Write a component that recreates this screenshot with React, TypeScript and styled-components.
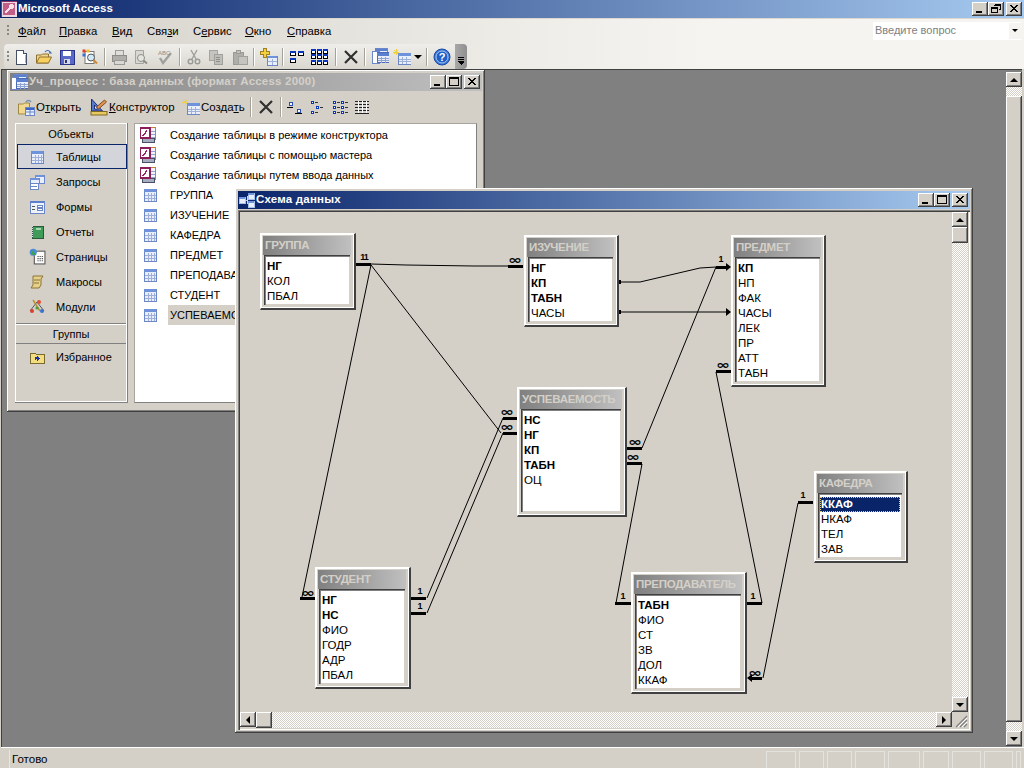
import React from "react";
import styled, { createGlobalStyle, css } from "styled-components";

const FACE = "#D4D0C8";
const UI = `"Liberation Sans", Arial, sans-serif`;

const Global = createGlobalStyle`
  html, body { margin: 0; padding: 0; background: ${FACE}; }
  body { font: 12px ${UI}; color: #000; }
  #root { width: 1024px; height: 768px; overflow: hidden; }
  u { text-decoration: underline; text-underline-offset: 1px; }
`;

const raised = css`
  background-color: ${FACE};
  box-shadow: inset -1px -1px #404040, inset 1px 1px #fff, inset -2px -2px #808080;
`;

const Screen = styled.div`
  width: 1024px; height: 768px; display: flex; flex-direction: column; overflow: hidden; background: ${FACE};
`;

const TitleBar = styled.div<{ $inactive?: boolean }>`
  height: 18px; flex: none; display: flex; align-items: center; gap: 1px; padding: 0 2px 0 1px;
  background: ${p => p.$inactive ? "linear-gradient(90deg,#808080,#C0C0C0)" : "linear-gradient(90deg,#0A246A,#A6CAF0)"};
`;
const TitleText = styled.span<{ $inactive?: boolean; $wide?: boolean }>`
  font: bold 11.5px ${UI}; color: ${p => (p.$inactive ? FACE : "#fff")}; white-space: nowrap; flex: 1; padding-bottom: 2px;
  ${p => p.$wide && "letter-spacing: 0.2px;"}
`;
const CtlGroup = styled.div`display: flex; align-items: center; flex: none;`;
const CtlBtn = styled.button<{ $gap?: number }>`
  ${raised}; width: 16px; height: 14px; padding: 0; border: 0; margin-left: ${p => p.$gap ?? 0}px;
  display: flex; align-items: center; justify-content: center;
  svg { width: 16px; height: 14px; display: block; }
`;

const MenuBar = styled.div`
  height: 26px; flex: none; display: flex; align-items: center; padding-bottom: 2px;
  background: linear-gradient(90deg,${FACE} 0%,#EDECE7 50%,#F5F4F1 70%); border-top: 1px solid #DCD8CF; box-sizing: border-box;
`;
const Grip = styled.i`
  width: 2px; height: 12px; margin-left: 7px; flex: none;
  background: repeating-linear-gradient(180deg,#8A8880 0 2px,transparent 2px 4px);
`;
const MenuItem = styled.span<{ $w: number }>`
  width: ${p => p.$w}px; flex: none; font: 11.3px ${UI};
`;
const AskBox = styled.div`
  margin-left: auto; margin-right: 3px; width: 148px; height: 18px; background: #fff; display: flex; align-items: center;
  color: #808080; font: 11px ${UI}; padding-left: 2px; box-sizing: border-box;
  span { flex: 1; padding-bottom: 2px; }
`;
const AskArrow = styled.b`
  width: 12px; height: 16px; background: #F5F4F1; display: flex; align-items: center; justify-content: center;
  &::after { content: ""; border: 3px solid transparent; border-top: 3px solid #000; border-bottom: 0; }
`;

const ToolRow = styled.div`
  height: 25px; flex: none; display: flex; align-items: stretch;
  background: linear-gradient(90deg,${FACE} 0%,#EDECE7 50%,#F5F4F1 70%);
`;
const ToolBand = styled.div`
  margin-left: 4px; width: 451px; flex: none; display: flex; align-items: center; height: 25px; box-sizing: border-box;
  background: linear-gradient(180deg,#EFEEEA,#DAD7D0); border-radius: 4px 0 0 4px;
  ${Grip} { margin-left: 3px; }
`;
const Chevron = styled.div`
  width: 12px; flex: none; background: linear-gradient(90deg,#A8A8A8,#8F8F8F); border-radius: 0 4px 4px 0;
  display: flex; align-items: flex-end; justify-content: center; padding-bottom: 3px; box-sizing: border-box;
  svg { width: 8px; height: 9px; display: block; }
`;
const ToolSlot = styled.span<{ $w: number }>`
  width: ${p => p.$w}px; flex: none; display: flex; align-items: center; justify-content: center; height: 22px;
`;
const ToolSep = styled.i<{ $h?: number }>`
  width: 8px; flex: none; height: ${p => p.$h ?? 18}px; display: block;
  background: linear-gradient(90deg,transparent 3px,#A5A29A 3px 4px,#fff 4px 5px,transparent 5px);
`;
const Ico = styled.svg<{ $s?: number }>`
  width: ${p => p.$s ?? 16}px; height: ${p => p.$s ?? 16}px; display: block; flex: none;
`;

const Workspace = styled.div`
  flex: 1; min-height: 0; display: flex; margin-left: 1px; padding-right: 2px;
  border-bottom: 1px solid #fff;
`;
const Desktop = styled.div`
  flex: 1; position: relative; background: #808080; border-left: 1px solid #404040; border-top: 1px solid #404040;
  overflow: hidden;
`;

const ScrollV = styled.div`
  display: flex; flex-direction: column; width: 16px; flex: none;
`;
const MainScroll = styled(ScrollV)`
  padding: 2px 0 1px 2px; background: #808080; width: 18px; box-sizing: border-box; border-top: 1px solid #404040;
`;
const ScrollH = styled.div`
  display: flex; height: 16px; min-width: 0;
`;
const ScrollBtn = styled.div`
  ${raised}; width: 16px; height: 15px; flex: none; display: flex; align-items: center; justify-content: center;
`;
const Arrow = styled.i<{ $d: "up" | "down" | "left" | "right" }>`
  width: 0; height: 0; display: block; border: 4px solid transparent;
  ${p => p.$d === "up" && "border-top:0;border-bottom:4px solid #000;"}
  ${p => p.$d === "down" && "border-bottom:0;border-top:4px solid #000;"}
  ${p => p.$d === "left" && "border-left:0;border-right:4px solid #000;"}
  ${p => p.$d === "right" && "border-right:0;border-left:4px solid #000;"}
`;
const Thumb = styled.div<{ $len?: number }>`
  ${raised};
  ${p => p.$len ? `flex: 0 0 ${p.$len}px;` : "flex: 1;"}
`;
const Track = styled.div<{ $len?: number }>`
  ${p => p.$len ? `flex: 0 0 ${p.$len}px;` : "flex: 1;"}
  background-image: conic-gradient(#fff 25%, ${FACE} 0 50%, #fff 0 75%, ${FACE} 0);
  background-size: 2px 2px;
`;

const StatusBar = styled.div`
  height: 20px; flex: none; display: flex; align-items: center; padding-left: 9px; padding-top: 2px; box-sizing: border-box;
  font: 11.5px ${UI}; background: ${FACE};
`;
const StatusText = styled.span`flex: 1; padding-left: 2px; border-left: 1px solid #E8E6E1; line-height: 18px;`;
const StatusCell = styled.i<{ $w: number }>`
  display: block; width: ${p => p.$w}px; height: 17px; flex: none; margin-right: 3px; box-sizing: border-box;
  border: 1px solid #E4E2DC; border-bottom: 0;
`;

const Win = styled.div<{ $x: number; $y: number; $w: number; $h: number }>`
  ${raised}; position: absolute; left: ${p => p.$x - 2}px; top: ${p => p.$y - 70}px;
  width: ${p => p.$w}px; height: ${p => p.$h}px; padding: 3px; box-sizing: border-box;
  display: flex; flex-direction: column;
  box-shadow: inset -1px -1px #404040, inset 1px 1px #fff, inset -2px -2px #808080, inset 2px 2px ${FACE};
`;

const DbBar = styled.div`
  height: 32px; flex: none; display: flex; align-items: center; padding-left: 8px; font: 11.5px ${UI};
`;
const DbBtn = styled.span<{ $w: number }>`
  width: ${p => p.$w}px; flex: none; display: flex; align-items: center; gap: 1px; white-space: nowrap;
`;
const DbBody = styled.div`
  flex: 1; min-height: 0; display: flex; gap: 6px; padding: 0 5px 6px 5px;
`;
const ObjPanel = styled.div`
  width: 113px; flex: none; display: flex; flex-direction: column; box-sizing: border-box; padding: 1px;
  box-shadow: inset 0 0 0 1px #fff; border-bottom: 1px solid #808080; border-right: 1px solid #808080; font: 11px ${UI};
`;
const ObjHead = styled.div<{ $line?: boolean }>`
  height: 20px; flex: none; display: flex; align-items: center; justify-content: center;
  ${p => p.$line && `margin-top: 4px; height: 21px; border-top: 1px solid #808080; border-bottom: 1px solid #808080; box-shadow: inset 0 1px #fff; box-sizing: border-box;`}
`;
const ObjItem = styled.div<{ $sel?: boolean }>`
  height: 25px; flex: none; box-sizing: border-box; display: flex; align-items: center; margin-left: 1px;
  padding-left: ${p => (p.$sel ? 11 : 12)}px; gap: 11px;
  ${p => p.$sel && `background: #D3D5DA; border: 1px solid #0A246A; margin-right: -1px;`}
  span { white-space: nowrap; }
`;
const ObjIcon = styled.b`
  width: 16px; height: 18px; flex: none; display: flex; align-items: center; justify-content: center;
`;
const ListPanel = styled.div`
  flex: 1; min-width: 0; background: #fff; padding-top: 1px; box-sizing: border-box; overflow: hidden;
  border: 1px solid #fff; border-bottom-color: #808080; border-right-color: #808080; border-top-color: #A8A59E; border-left-color: #A8A59E;
  font: 11px ${UI};
`;
const ListRow = styled.div`
  height: 20px; display: flex; align-items: center; white-space: nowrap; padding-left: 5px;
`;
const ListIcon = styled.span<{ $shift?: number }>`
  width: 28px; flex: none; display: flex; justify-content: flex-start; box-sizing: border-box; padding-left: ${p => p.$shift ?? 0}px;
`;
const ListLabel = styled.span<{ $sel?: boolean }>`
  padding: 0 0 0 2px; height: 20px; line-height: 20px; flex: none; ${p => p.$sel && `background: ${FACE}; padding-right: 60px;`}
`;

const Client = styled.div`
  flex: 1; min-height: 0; margin-top: 1px; padding: 2px; display: grid;
  grid-template-columns: minmax(0,1fr) 16px; grid-template-rows: minmax(0,1fr) 16px; background: ${FACE};
  box-shadow: inset 1px 1px #808080, inset 2px 2px #404040, inset -1px -1px #fff;
`;
const Canvas = styled.div`position: relative; overflow: hidden;`;
const Lines = styled.svg`position: absolute; left: 0; top: 0; width: 712px; height: 500px;`;
const Resize = styled.svg`width: 16px; height: 16px; display: block;`;

const TableBox = styled.div<{ $x: number; $y: number; $w: number }>`
  position: absolute; left: ${p => p.$x - 240}px; top: ${p => p.$y - 212}px; width: ${p => p.$w}px;
  box-sizing: border-box; background: ${FACE}; padding: 2px 3px 3px 2px;
  border-style: solid; border-color: #fff #404040 #404040 #fff; border-width: 1px 2px 2px 1px;
  box-shadow: inset 1px 1px #fff, inset -1px -1px #fff;
`;
const TableTitle = styled.div`
  height: 19px; padding-left: 2px; font: bold 11.5px/18px ${UI}; letter-spacing: -0.3px; color: ${FACE}; white-space: nowrap; overflow: hidden;
  background: linear-gradient(90deg,#808080,#C0C0C0);
`;
const FieldList = styled.div<{ $h?: number }>`
  background: #fff; padding: 4px 2px 1px 2px; margin: 0 1px; box-sizing: border-box;
  ${p => p.$h && `height: ${p.$h}px;`}
  box-shadow: inset 1px 1px #404040, inset 2px 2px #808080, inset -1px -1px ${FACE};
  font: 11.5px ${UI};
`;
const Field = styled.div<{ $key?: boolean; $sel?: boolean }>`
  height: 15px; line-height: 15px; padding-left: 1px; white-space: nowrap;
  ${p => p.$key && "font-weight: bold;"}
  ${p => p.$sel && `background: #0A246A; color: #fff; outline: 1px dotted #E8D060; outline-offset: -1px;`}
`;

/* ---------- icons ---------- */
const TableIco = () => (
  <Ico viewBox="0 0 16 16" shapeRendering="crispEdges">
    <rect x="2" y="2" width="12" height="12" fill="#E8EEFA" stroke="#6C87C8" />
    <rect x="2" y="2" width="12" height="3" fill="#6F93DA" />
    <path d="M3 8h11M3 11h11M6 6v8M9 6v8M12 6v8" stroke="#9FB0D8" />
  </Ico>
);
const WizardIco = () => (
  <Ico viewBox="0 0 16 16" $s={17} shapeRendering="crispEdges">
    <rect x="6" y="0" width="9" height="12" fill="#F4F4F4" stroke="#C88038" />
    <path d="M9 4h5M9 7h5M9 10h5" stroke="#8FA4D0" />
    <rect x="2" y="11" width="12" height="4" fill="#A8ACC0" stroke="#4A4F68" />
    <rect x="0" y="1" width="9" height="9" fill="#fff" stroke="#8A1E5A" strokeWidth="2" />
    <path d="M2 8l4-5 1 1-4 5z" fill="#A02070" />
  </Ico>
);
const QueryIco = () => (
  <Ico viewBox="0 0 16 16" shapeRendering="crispEdges">
    <rect x="6" y="1" width="9" height="8" fill="#E8EEFA" stroke="#6C87C8" /><rect x="6" y="1" width="9" height="2" fill="#6F93DA" />
    <rect x="1" y="4" width="9" height="5" fill="#E8EEFA" stroke="#6C87C8" /><rect x="1" y="4" width="9" height="2" fill="#6F93DA" />
    <rect x="1" y="9" width="8" height="6" fill="#fff" stroke="#6C87C8" /><path d="M2 12h6" stroke="#6C87C8" />
  </Ico>
);
const FormIco = () => (
  <Ico viewBox="0 0 16 16" shapeRendering="crispEdges">
    <rect x="1" y="2" width="14" height="12" fill="#EEF2FA" stroke="#6C87C8" /><rect x="1" y="2" width="14" height="2" fill="#5C80D0" />
    <path d="M3 7h3M3 10h3" stroke="#555" /><rect x="8" y="6" width="5" height="2" fill="#fff" stroke="#6C87C8" /><rect x="8" y="9" width="5" height="2" fill="#fff" stroke="#6C87C8" />
  </Ico>
);
const ReportIco = () => (
  <Ico viewBox="0 0 16 16" shapeRendering="crispEdges">
    <rect x="3" y="2" width="11" height="12" fill="#3E9B58" stroke="#2C5A38" />
    <path d="M3 2v12" stroke="#DDE" strokeDasharray="1 1" /><rect x="7" y="4" width="5" height="2" fill="#A8D8B0" />
  </Ico>
);
const PageIco = () => (
  <Ico viewBox="0 0 16 16" $s={17}>
    <rect x="5" y="3" width="10" height="12" fill="#fff" stroke="#555" />
    <path d="M8 8h5M8 10h5M8 12h5" stroke="#333" strokeDasharray="1 1" />
    <circle cx="4" cy="4" r="3.4" fill="#4A8CD8" /><path d="M2 2c2 0 2 3 4 3 0 2-2 2-3 1z" fill="#3FA048" />
  </Ico>
);
const MacroIco = () => (
  <Ico viewBox="0 0 16 16">
    <path d="M4 2h10l-2 3v6l-2 3H2l2-3V5z" fill="#E6D08A" stroke="#8A7434" />
    <path d="M5 6h6M5 9h5" stroke="#8A7434" />
  </Ico>
);
const ModuleIco = () => (
  <Ico viewBox="0 0 18 16" $s={18}>
    <path d="M2 12L9 3l7 9" fill="none" stroke="#556" strokeWidth="1" />
    <path d="M5 1l7 11" stroke="#B89020" strokeWidth="1.4" />
    <circle cx="4" cy="12" r="2" fill="#D84030" /><circle cx="14" cy="12" r="2" fill="#3A70D0" /><circle cx="11" cy="3" r="2" fill="#E05030" /><circle cx="9" cy="9" r="1.6" fill="#48A048" />
  </Ico>
);
const FavIco = () => (
  <Ico viewBox="0 0 16 16" shapeRendering="crispEdges">
    <path d="M1 4h5l1 1h8v9H1z" fill="#F2DE80" stroke="#7A6A30" />
    <path d="M8 7v5M6 9.500h5M6 8l4 3M10 8l-4 3" stroke="#2030A0" />
  </Ico>
);
const NewIco = () => (
  <Ico viewBox="0 0 16 16" shapeRendering="crispEdges">
    <path d="M3 1h7l3 3v11H3z" fill="#fff" stroke="#44506A" /><path d="M10 1v3h3" fill="#D8E0F0" stroke="#44506A" /><path d="M12 6v8" stroke="#A8B4D0" />
  </Ico>
);
const OpenIco = () => (
  <Ico viewBox="0 0 16 16">
    <path d="M0.500 6h5l1-1h6v9h-12z" fill="#F0D890" stroke="#907030" />
    <path d="M0.500 14l3-6h12l-3 6z" fill="#F8D060" stroke="#907030" />
    <path d="M9 3c1.500-2 4-2 5 0l1 1-2 0" fill="none" stroke="#3A6AB0" strokeWidth="1.200" />
  </Ico>
);
const SaveIco = () => (
  <Ico viewBox="0 0 16 16" shapeRendering="crispEdges">
    <rect x="1" y="1" width="14" height="14" fill="#5A68C8" stroke="#2A3488" />
    <rect x="4" y="2" width="8" height="5" fill="#fff" /><rect x="5" y="10" width="6" height="5" fill="#D8D8E0" /><rect x="6" y="11" width="2" height="3" fill="#2A3488" />
  </Ico>
);
const SearchIco = () => (
  <Ico viewBox="0 0 16 16">
    <rect x="3" y="2.500" width="9" height="12" fill="#fff" stroke="#777" />
    <rect x="0.500" y="0.500" width="3" height="3" fill="#E04030" /><rect x="4.500" y="0.500" width="3" height="3" fill="#F0C030" /><rect x="0.500" y="4.500" width="3" height="3" fill="#3A70D0" />
    <circle cx="9" cy="8.500" r="3.500" fill="#D0E8F8" stroke="#555" /><path d="M11.500 11l3.500 3.500" stroke="#D08830" strokeWidth="2" />
  </Ico>
);
const PrintIco = () => (
  <Ico viewBox="0 0 16 16" shapeRendering="crispEdges">
    <path d="M4 1h8v5H4z" fill="#E0DED8" stroke="#9A9A96" /><rect x="1" y="6" width="14" height="6" fill="#B0AEA8" stroke="#8C8C88" /><rect x="3" y="11" width="10" height="4" fill="#DAD8D2" stroke="#9A9A96" />
  </Ico>
);
const PreviewIco = () => (
  <Ico viewBox="0 0 16 16">
    <path d="M2.500 1.500h8v13h-8z" fill="#DAD8D2" stroke="#A4A4A0" /><circle cx="8" cy="9" r="3.500" fill="#E6E4DE" stroke="#8C8C88" /><path d="M10.500 11.500l3.500 3" stroke="#8C8C88" strokeWidth="2" />
  </Ico>
);
const SpellIco = () => (
  <Ico viewBox="0 0 16 16">
    <path d="M3 9l3 5L14 4" fill="none" stroke="#A0A09C" strokeWidth="2.400" />
    <text x="1" y="6" fontFamily={UI} fontSize="6" fill="#8C8C88">ABC</text>
  </Ico>
);
const CutIco = () => (
  <Ico viewBox="0 0 16 16">
    <path d="M5 1l5 9M11 1L6 10" stroke="#A0A09C" strokeWidth="1.400" /><circle cx="4.500" cy="12.500" r="2.300" fill="none" stroke="#9A9A96" strokeWidth="1.400" /><circle cx="11.500" cy="12.500" r="2.300" fill="none" stroke="#9A9A96" strokeWidth="1.400" />
  </Ico>
);
const CopyIco = () => (
  <Ico viewBox="0 0 16 16" shapeRendering="crispEdges">
    <rect x="1" y="1" width="8" height="10" fill="#C6C4BE" stroke="#A4A4A0" /><rect x="6" y="5" width="8" height="10" fill="#C0BEB8" stroke="#A0A09C" /><path d="M8 8h4M8 10h4M8 12h4" stroke="#8E8E8A" />
  </Ico>
);
const PasteIco = () => (
  <Ico viewBox="0 0 16 16" shapeRendering="crispEdges">
    <rect x="1" y="3" width="10" height="12" fill="#B0AEA8" stroke="#9A9A96" /><rect x="4" y="1" width="4" height="3" fill="#C4C2BC" stroke="#9A9A96" /><rect x="6" y="7" width="9" height="8" fill="#C6C4BE" stroke="#A0A09C" />
  </Ico>
);
const AddRelIco = () => (
  <Ico viewBox="0 0 18 18" $s={18} shapeRendering="crispEdges">
    <path d="M3 0h3v3h3v3H6v3H3V6H0V3h3z" fill="#F2D040" stroke="#A08020" />
    <rect x="7" y="8" width="10" height="9" fill="#E8EEFA" stroke="#6C87C8" /><rect x="7" y="8" width="10" height="2" fill="#6F93DA" /><path d="M8 13h9M12 11v6" stroke="#9FB0D8" />
  </Ico>
);
const blue = "#0838C0";
const RelDirect = () => (
  <Ico viewBox="0 0 14 14" $s={14} shapeRendering="crispEdges">
    <rect x="0.500" y="1.500" width="5" height="4" fill="#fff" stroke="#000" /><rect x="0" y="1" width="6" height="2" fill={blue} />
    <rect x="8.500" y="1.500" width="5" height="4" fill="#fff" stroke="#000" /><rect x="8" y="1" width="6" height="2" fill={blue} />
    <rect x="0.500" y="8.500" width="5" height="4" fill="#fff" stroke="#000" /><rect x="0" y="8" width="6" height="2" fill={blue} />
  </Ico>
);
const RelAll = () => {
  const cells: React.ReactNode[] = [];
  [0, 6, 12].forEach(x => [0, 5, 11].forEach(y => cells.push(
    <g key={`${x}${y}`}><rect x={x + .5} y={y + .5} width="4" height="4" fill="#fff" stroke="#000" /><rect x={x} y={y} width="5" height="2" fill={blue} /></g>
  )));
  return <Ico viewBox="0 0 17 16" $s={17} shapeRendering="crispEdges">{cells}</Ico>;
};
const DeleteIco = () => (
  <Ico viewBox="0 0 16 16"><path d="M2 2l12 12M14 2L2 14" stroke="#303030" strokeWidth="2.200" /></Ico>
);
const DbWinIco = () => (
  <Ico viewBox="0 0 17 16" $s={17} shapeRendering="crispEdges">
    <rect x="3" y="0" width="12" height="10" fill="#E8EEFA" stroke="#6C87C8" /><rect x="3" y="0" width="12" height="2" fill="#5C80D0" />
    <rect x="0" y="3" width="7" height="12" fill="#fff" stroke="#6C87C8" />
    <rect x="5" y="4" width="12" height="10" fill="#E8EEFA" stroke="#4C6CB8" /><rect x="5" y="4" width="12" height="3" fill="#5C80D0" /><path d="M6 10h11M6 12h11M9 8v6M13 8v6" stroke="#8FA4D0" />
  </Ico>
);
const NewObjIco = () => (
  <Ico viewBox="0 0 18 16" $s={18} shapeRendering="crispEdges">
    <path d="M3 0v6M0 3h6M1 1l4 4M5 1L1 5" stroke="#F0D040" />
    <rect x="5" y="4" width="13" height="11" fill="#E8EEFA" stroke="#6C87C8" /><rect x="5" y="4" width="13" height="3" fill="#6F93DA" /><path d="M6 10h12M6 12h12M9 8v7M13 8v7" stroke="#9FB0D8" />
  </Ico>
);
const OpenDbIco = () => (
  <Ico viewBox="0 0 17 17" $s={17}>
    <path d="M0.500 5h5l1-1h5v11h-11z" fill="#F0D890" stroke="#A08840" />
    <rect x="7.500" y="8.500" width="9" height="8" fill="#E8EEFA" stroke="#6C87C8" /><rect x="8" y="9" width="8" height="2" fill="#3C64C8" /><path d="M8 13h8M12 11v6" stroke="#6C87C8" />
    <path d="M8 3c1-2 4-2 5 0" fill="none" stroke="#7A90B0" strokeWidth="1.300" />
  </Ico>
);
const DesignIco = () => (
  <Ico viewBox="0 0 17 18" $s={18}>
    <path d="M1 1v12h11z" fill="#5878C8" stroke="#1C2E78" /><path d="M4 7v4h4z" fill="#fff" stroke="#1C2E78" />
    <path d="M6 9l8-7 2 2-8 7z" fill="#E09050" stroke="#805020" />
    <rect x="0.500" y="13.500" width="16" height="3.500" fill="#E8C860" stroke="#806820" />
  </Ico>
);
const ViewIco = ({ kind }: { kind: number }) => {
  if (kind === 0) return (
    <Ico viewBox="0 0 16 14" $s={16} shapeRendering="crispEdges">
      <rect x="2" y="2" width="3" height="3" fill="#fff" stroke="#2850B0" /><path d="M0 7h6" stroke="#000" /><rect x="10" y="9" width="3" height="3" fill="#fff" stroke="#2850B0" /><path d="M8 13h7" stroke="#000" />
    </Ico>
  );
  if (kind === 3) return (
    <Ico viewBox="0 0 16 16" shapeRendering="crispEdges">
      <path d="M1 2h14M1 5h14M1 8h14M1 11h14M1 14h14" stroke="#222" />
      <path d="M4 2v12M8 2v12M12 2v12" stroke="#fff" />
    </Ico>
  );
  const pts = kind === 1 ? [[1, 2], [6, 7], [1, 12]] : [[0, 2], [8, 2], [0, 7], [8, 7], [0, 12], [8, 12]];
  return (
    <Ico viewBox="0 0 16 16" shapeRendering="crispEdges">
      {pts.map(([x, y], i) => (
        <g key={i}><rect x={x + .5} y={y + .5} width="2" height="2" fill="#fff" stroke={blue} /><path d={`M${x + 4} ${y + 1}h3`} stroke="#333" /></g>
      ))}
    </Ico>
  );
};
const HelpIco = () => (
  <Ico viewBox="0 0 18 18" $s={18}>
    <circle cx="9" cy="9" r="8" fill="#3A78D8" stroke="#1848A0" /><circle cx="9" cy="9" r="6" fill="#2060C8" stroke="#A8C8F0" />
    <text x="9" y="13" textAnchor="middle" fontFamily={UI} fontSize="11" fontWeight="bold" fill="#fff">?</text>
  </Ico>
);
const SchemaIco = () => (
  <Ico viewBox="0 0 16 16" shapeRendering="crispEdges">
    <rect x="0" y="5" width="6" height="6" fill="#E8EEFA" stroke="#A8C0E8" /><rect x="0" y="5" width="6" height="2" fill="#6F93DA" />
    <rect x="9" y="1" width="6" height="6" fill="#E8EEFA" stroke="#A8C0E8" /><rect x="9" y="1" width="6" height="2" fill="#6F93DA" />
    <rect x="9" y="9" width="6" height="6" fill="#E8EEFA" stroke="#A8C0E8" /><rect x="9" y="9" width="6" height="2" fill="#6F93DA" />
    <path d="M6 8h3M8 4v8" stroke="#C8D4F0" />
  </Ico>
);
const KeyIco = () => (
  <Ico viewBox="0 0 16 16" shapeRendering="crispEdges">
    <rect x="0" y="0" width="16" height="16" fill="#F0D8E0" stroke="#8A3060" />
    <rect x="2" y="2" width="12" height="12" fill="#C06088" />
    <path d="M4 12l5-5" stroke="#F8E0E8" strokeWidth="2" /><circle cx="10.500" cy="5.500" r="2.500" fill="#F8E0E8" />
  </Ico>
);

const Glyph = ({ k }: { k: "min" | "max" | "restore" | "close" }) => (
  <svg viewBox="0 0 16 14" shapeRendering="crispEdges">
    {k === "min" && <rect x="4" y="9" width="6" height="2" fill="#000" />}
    {k === "max" && <path d="M3.500 2.500h9v8h-9zM3 3.500h10" fill="none" stroke="#000" />}
    {k === "restore" && <path d="M6.500 2.500h6v5h-2M6 3.500h7M3.500 5.500h6v5h-6zM3 6.500h7" fill="none" stroke="#000" />}
    {k === "close" && <path d="M4 3l7 7M5 3l7 7M11 3l-7 7M12 3l-7 7" stroke="#000" shapeRendering="auto" />}
  </svg>
);

/* ---------- data ---------- */
const menu: [React.ReactNode, number][] = [
  [<><u>Ф</u>айл</>, 41], [<><u>П</u>равка</>, 53], [<><u>В</u>ид</>, 35], [<>Свя<u>з</u>и</>, 46],
  [<>С<u>е</u>рвис</>, 52], [<><u>О</u>кно</>, 42], [<><u>С</u>правка</>, 60],
];
const objects: [React.ReactNode, string][] = [
  [<TableIco />, "Таблицы"], [<QueryIco />, "Запросы"], [<FormIco />, "Формы"], [<ReportIco />, "Отчеты"],
  [<PageIco />, "Страницы"], [<MacroIco />, "Макросы"], [<ModuleIco />, "Модули"],
];
const wizards = ["Создание таблицы в режиме конструктора", "Создание таблицы с помощью мастера", "Создание таблицы путем ввода данных"];
const tableNames = ["ГРУППА", "ИЗУЧЕНИЕ", "КАФЕДРА", "ПРЕДМЕТ", "ПРЕПОДАВАТЕЛЬ", "СТУДЕНТ", "УСПЕВАЕМОСТЬ"];

type T = { name: string; x: number; y: number; w: number; keys: string[]; rest: string[]; h?: number; sel?: string };
const tables: T[] = [
  { name: "ГРУППА", x: 260, y: 233, w: 96, keys: ["НГ"], rest: ["КОЛ", "ПБАЛ"] },
  { name: "ИЗУЧЕНИЕ", x: 524, y: 235, w: 95, keys: ["НГ", "КП", "ТАБН"], rest: ["ЧАСЫ"] },
  { name: "ПРЕДМЕТ", x: 731, y: 235, w: 95, keys: ["КП"], rest: ["НП", "ФАК", "ЧАСЫ", "ЛЕК", "ПР", "АТТ", "ТАБН"] },
  { name: "УСПЕВАЕМОСТЬ", x: 517, y: 387, w: 110, keys: ["НС", "НГ", "КП", "ТАБН"], rest: ["ОЦ"], h: 103 },
  { name: "КАФЕДРА", x: 814, y: 471, w: 94, keys: ["ККАФ"], rest: ["НКАФ", "ТЕЛ", "ЗАВ"], sel: "ККАФ" },
  { name: "СТУДЕНТ", x: 315, y: 567, w: 96, keys: ["НГ", "НС"], rest: ["ФИО", "ГОДР", "АДР", "ПБАЛ"] },
  { name: "ПРЕПОДАВАТЕЛЬ", x: 631, y: 572, w: 116, keys: ["ТАБН"], rest: ["ФИО", "СТ", "ЗВ", "ДОЛ", "ККАФ"] },
];

const thin = [
  "371,264 406,265 474,266 508,266",
  "371,265 302,597",
  "371,265 501,433",
  "427,598 503,418",
  "427,613 503,433",
  "642,448 716,267",
  "642,464 616,603",
  "620,282 640,282 700,268 716,267",
  "620,312 726,312",
  "716,372 762,603",
  "798,503 763,678",
];
const thick: [number, number, number][] = [
  [356, 371, 264], [508, 523, 266], [300, 315, 598], [503, 517, 418], [503, 517, 433], [411, 426, 598], [411, 426, 613],
  [627, 642, 448], [627, 642, 463], [716, 726, 267], [716, 731, 371], [615, 631, 603], [747, 762, 603], [798, 813, 502], [752, 762, 678],
];
const ones: [number, number][] = [[420, 594], [420, 609], [721, 262], [623, 599], [753, 599], [803, 498]];
const infs: [number, number][] = [[515, 263.5], [507, 415.5], [507, 430.5], [635, 445.5], [633, 460.5], [308, 596.5], [723, 368.5], [755, 676.5]];

export default function App() {
  return (
    <Screen>
      <Global />
      <TitleBar>
        <KeyIco />
        <TitleText>Microsoft Access</TitleText>
        <CtlGroup>
          <CtlBtn><Glyph k="min" /></CtlBtn>
          <CtlBtn><Glyph k="restore" /></CtlBtn>
          <CtlBtn $gap={2}><Glyph k="close" /></CtlBtn>
        </CtlGroup>
      </TitleBar>
      <MenuBar>
        <Grip />
        <MenuItem $w={9} />
        {menu.map((m, i) => <MenuItem key={i} $w={m[1]}>{m[0]}</MenuItem>)}
        <AskBox><span>Введите вопрос</span><AskArrow /></AskBox>
      </MenuBar>
      <ToolRow>
        <ToolBand>
          <Grip />
          <ToolSlot $w={23}><NewIco /></ToolSlot>
          <ToolSlot $w={24}><OpenIco /></ToolSlot>
          <ToolSlot $w={22}><SaveIco /></ToolSlot>
          <ToolSlot $w={23}><SearchIco /></ToolSlot>
          <ToolSep />
          <ToolSlot $w={20}><PrintIco /></ToolSlot>
          <ToolSlot $w={24}><PreviewIco /></ToolSlot>
          <ToolSlot $w={23}><SpellIco /></ToolSlot>
          <ToolSep />
          <ToolSlot $w={19}><CutIco /></ToolSlot>
          <ToolSlot $w={26}><CopyIco /></ToolSlot>
          <ToolSlot $w={21}><PasteIco /></ToolSlot>
          <ToolSep />
          <ToolSlot $w={21}><AddRelIco /></ToolSlot>
          <ToolSep />
          <ToolSlot $w={19}><RelDirect /></ToolSlot>
          <ToolSlot $w={26}><RelAll /></ToolSlot>
          <ToolSep />
          <ToolSlot $w={21}><DeleteIco /></ToolSlot>
          <ToolSep />
          <ToolSlot $w={22}><DbWinIco /></ToolSlot>
          <ToolSlot $w={22}><NewObjIco /></ToolSlot>
          <ToolSlot $w={10}><Arrow $d="down" /></ToolSlot>
          <ToolSep />
          <ToolSlot $w={22}><HelpIco /></ToolSlot>
        </ToolBand>
        <Chevron>
          <svg viewBox="0 0 8 9" shapeRendering="crispEdges"><path d="M1 0h6v1H1zM1 2h6v1H1zM1 4h6v1L4 8 1 5z" fill="#000" /></svg>
        </Chevron>
      </ToolRow>
      <Workspace>
        <Desktop>
          <Win $x={7} $y={70} $w={478} $h={342}>
            <TitleBar $inactive>
              <DbWinIco />
              <TitleText $inactive $wide>Уч_процесс : база данных (формат Access 2000)</TitleText>
              <CtlGroup>
                <CtlBtn><Glyph k="min" /></CtlBtn>
                <CtlBtn><Glyph k="max" /></CtlBtn>
                <CtlBtn $gap={2}><Glyph k="close" /></CtlBtn>
              </CtlGroup>
            </TitleBar>
            <DbBar>
              <DbBtn $w={72}><OpenDbIco /><span>О<u>т</u>крыть</span></DbBtn>
              <DbBtn $w={92}><DesignIco /><span><u>К</u>онструктор</span></DbBtn>
              <DbBtn $w={65}><NewObjIco /><span>Созда<u>т</u>ь</span></DbBtn>
              <ToolSep $h={20} />
              <ToolSlot $w={22}><DeleteIco /></ToolSlot>
              <ToolSep $h={20} />
              <ToolSlot $w={19}><ViewIco kind={0} /></ToolSlot>
              <ToolSlot $w={28}><ViewIco kind={1} /></ToolSlot>
              <ToolSlot $w={18}><ViewIco kind={2} /></ToolSlot>
              <ToolSlot $w={24}><ViewIco kind={3} /></ToolSlot>
            </DbBar>
            <DbBody>
              <ObjPanel>
                <ObjHead>Объекты</ObjHead>
                {objects.map(([ic, label], i) => <ObjItem key={label} $sel={i === 0}><ObjIcon>{ic}</ObjIcon><span>{label}</span></ObjItem>)}
                <ObjHead $line>Группы</ObjHead>
                <ObjItem><ObjIcon><FavIco /></ObjIcon><span>Избранное</span></ObjItem>
              </ObjPanel>
              <ListPanel>
                {wizards.map(w => <ListRow key={w}><ListIcon><WizardIco /></ListIcon><ListLabel>{w}</ListLabel></ListRow>)}
                {tableNames.map((n, i) => (
                  <ListRow key={n}><ListIcon $shift={2}><TableIco /></ListIcon><ListLabel $sel={i === 6}>{n}</ListLabel></ListRow>
                ))}
              </ListPanel>
            </DbBody>
          </Win>

          <Win $x={235} $y={188} $w={738} $h={545}>
            <TitleBar>
              <SchemaIco />
              <TitleText $wide>Схема данных</TitleText>
              <CtlGroup>
                <CtlBtn><Glyph k="min" /></CtlBtn>
                <CtlBtn><Glyph k="max" /></CtlBtn>
                <CtlBtn $gap={2}><Glyph k="close" /></CtlBtn>
              </CtlGroup>
            </TitleBar>
            <Client>
              <Canvas>
                <Lines viewBox="240 212 712 500">
                  {thin.map(p => <polyline key={p} points={p} fill="none" stroke="#000" strokeWidth="1" />)}
                  {thick.map(([a, b, y]) => <rect key={`${a}${y}`} x={a} y={y - 1} width={b - a} height="3" fill="#000" />)}
                  <path d="M621 280v4h-2v-4zM621 310v4h-2v-4zM726 308l5 4-5 4zM726 263l5 4-5 4zM747 678l5-4v8z" fill="#000" />
                  {ones.map(([x, y]) => (
                    <text key={`${x}${y}`} x={x} y={y} fontFamily={UI} fontWeight="bold" fontSize="9" textAnchor="middle">1</text>
                  ))}
                  <text x="364" y="260" fontFamily={UI} fontWeight="bold" fontSize="9" textAnchor="middle" letterSpacing="-1">11</text>
                  {infs.map(([x, y]) => (
                    <text key={`${x}${y}`} transform={`translate(${x} ${y}) scale(1.4 1)`} fontFamily={`"DejaVu Sans", sans-serif`} fontWeight="bold" fontSize="12" textAnchor="middle">∞</text>
                  ))}
                </Lines>
                {tables.map(t => (
                  <TableBox key={t.name} $x={t.x} $y={t.y} $w={t.w}>
                    <TableTitle>{t.name}</TableTitle>
                    <FieldList $h={t.h}>
                      {t.keys.map(f => <Field key={f} $key $sel={f === t.sel}>{f}</Field>)}
                      {t.rest.map(f => <Field key={f}>{f}</Field>)}
                    </FieldList>
                  </TableBox>
                ))}
              </Canvas>
              <ScrollV>
                <ScrollBtn><Arrow $d="up" /></ScrollBtn>
                <Thumb $len={16} />
                <Track />
                <ScrollBtn><Arrow $d="down" /></ScrollBtn>
              </ScrollV>
              <ScrollH>
                <ScrollBtn><Arrow $d="left" /></ScrollBtn>
                <Thumb $len={16} />
                <Track />
                <ScrollBtn><Arrow $d="right" /></ScrollBtn>
              </ScrollH>
              <Resize viewBox="0 0 16 16"><path d="M15 4L4 15M15 8L8 15M15 12L12 15" stroke="#808080" strokeWidth="1.200" /><path d="M15 6L6 15M15 10L10 15" stroke="#fff" /></Resize>
            </Client>
          </Win>
        </Desktop>
        <MainScroll>
          <ScrollBtn><Arrow $d="up" /></ScrollBtn>
          <Track $len={9} />
          <Thumb />
          <Track $len={9} />
          <ScrollBtn><Arrow $d="down" /></ScrollBtn>
        </MainScroll>
      </Workspace>
      <StatusBar>
        <StatusText>Готово</StatusText>
        <StatusCell $w={30} /><StatusCell $w={25} /><StatusCell $w={25} /><StatusCell $w={30} />
        <StatusCell $w={32} /><StatusCell $w={26} /><StatusCell $w={29} /><StatusCell $w={29} /><StatusCell $w={5} />
      </StatusBar>
    </Screen>
  );
}
